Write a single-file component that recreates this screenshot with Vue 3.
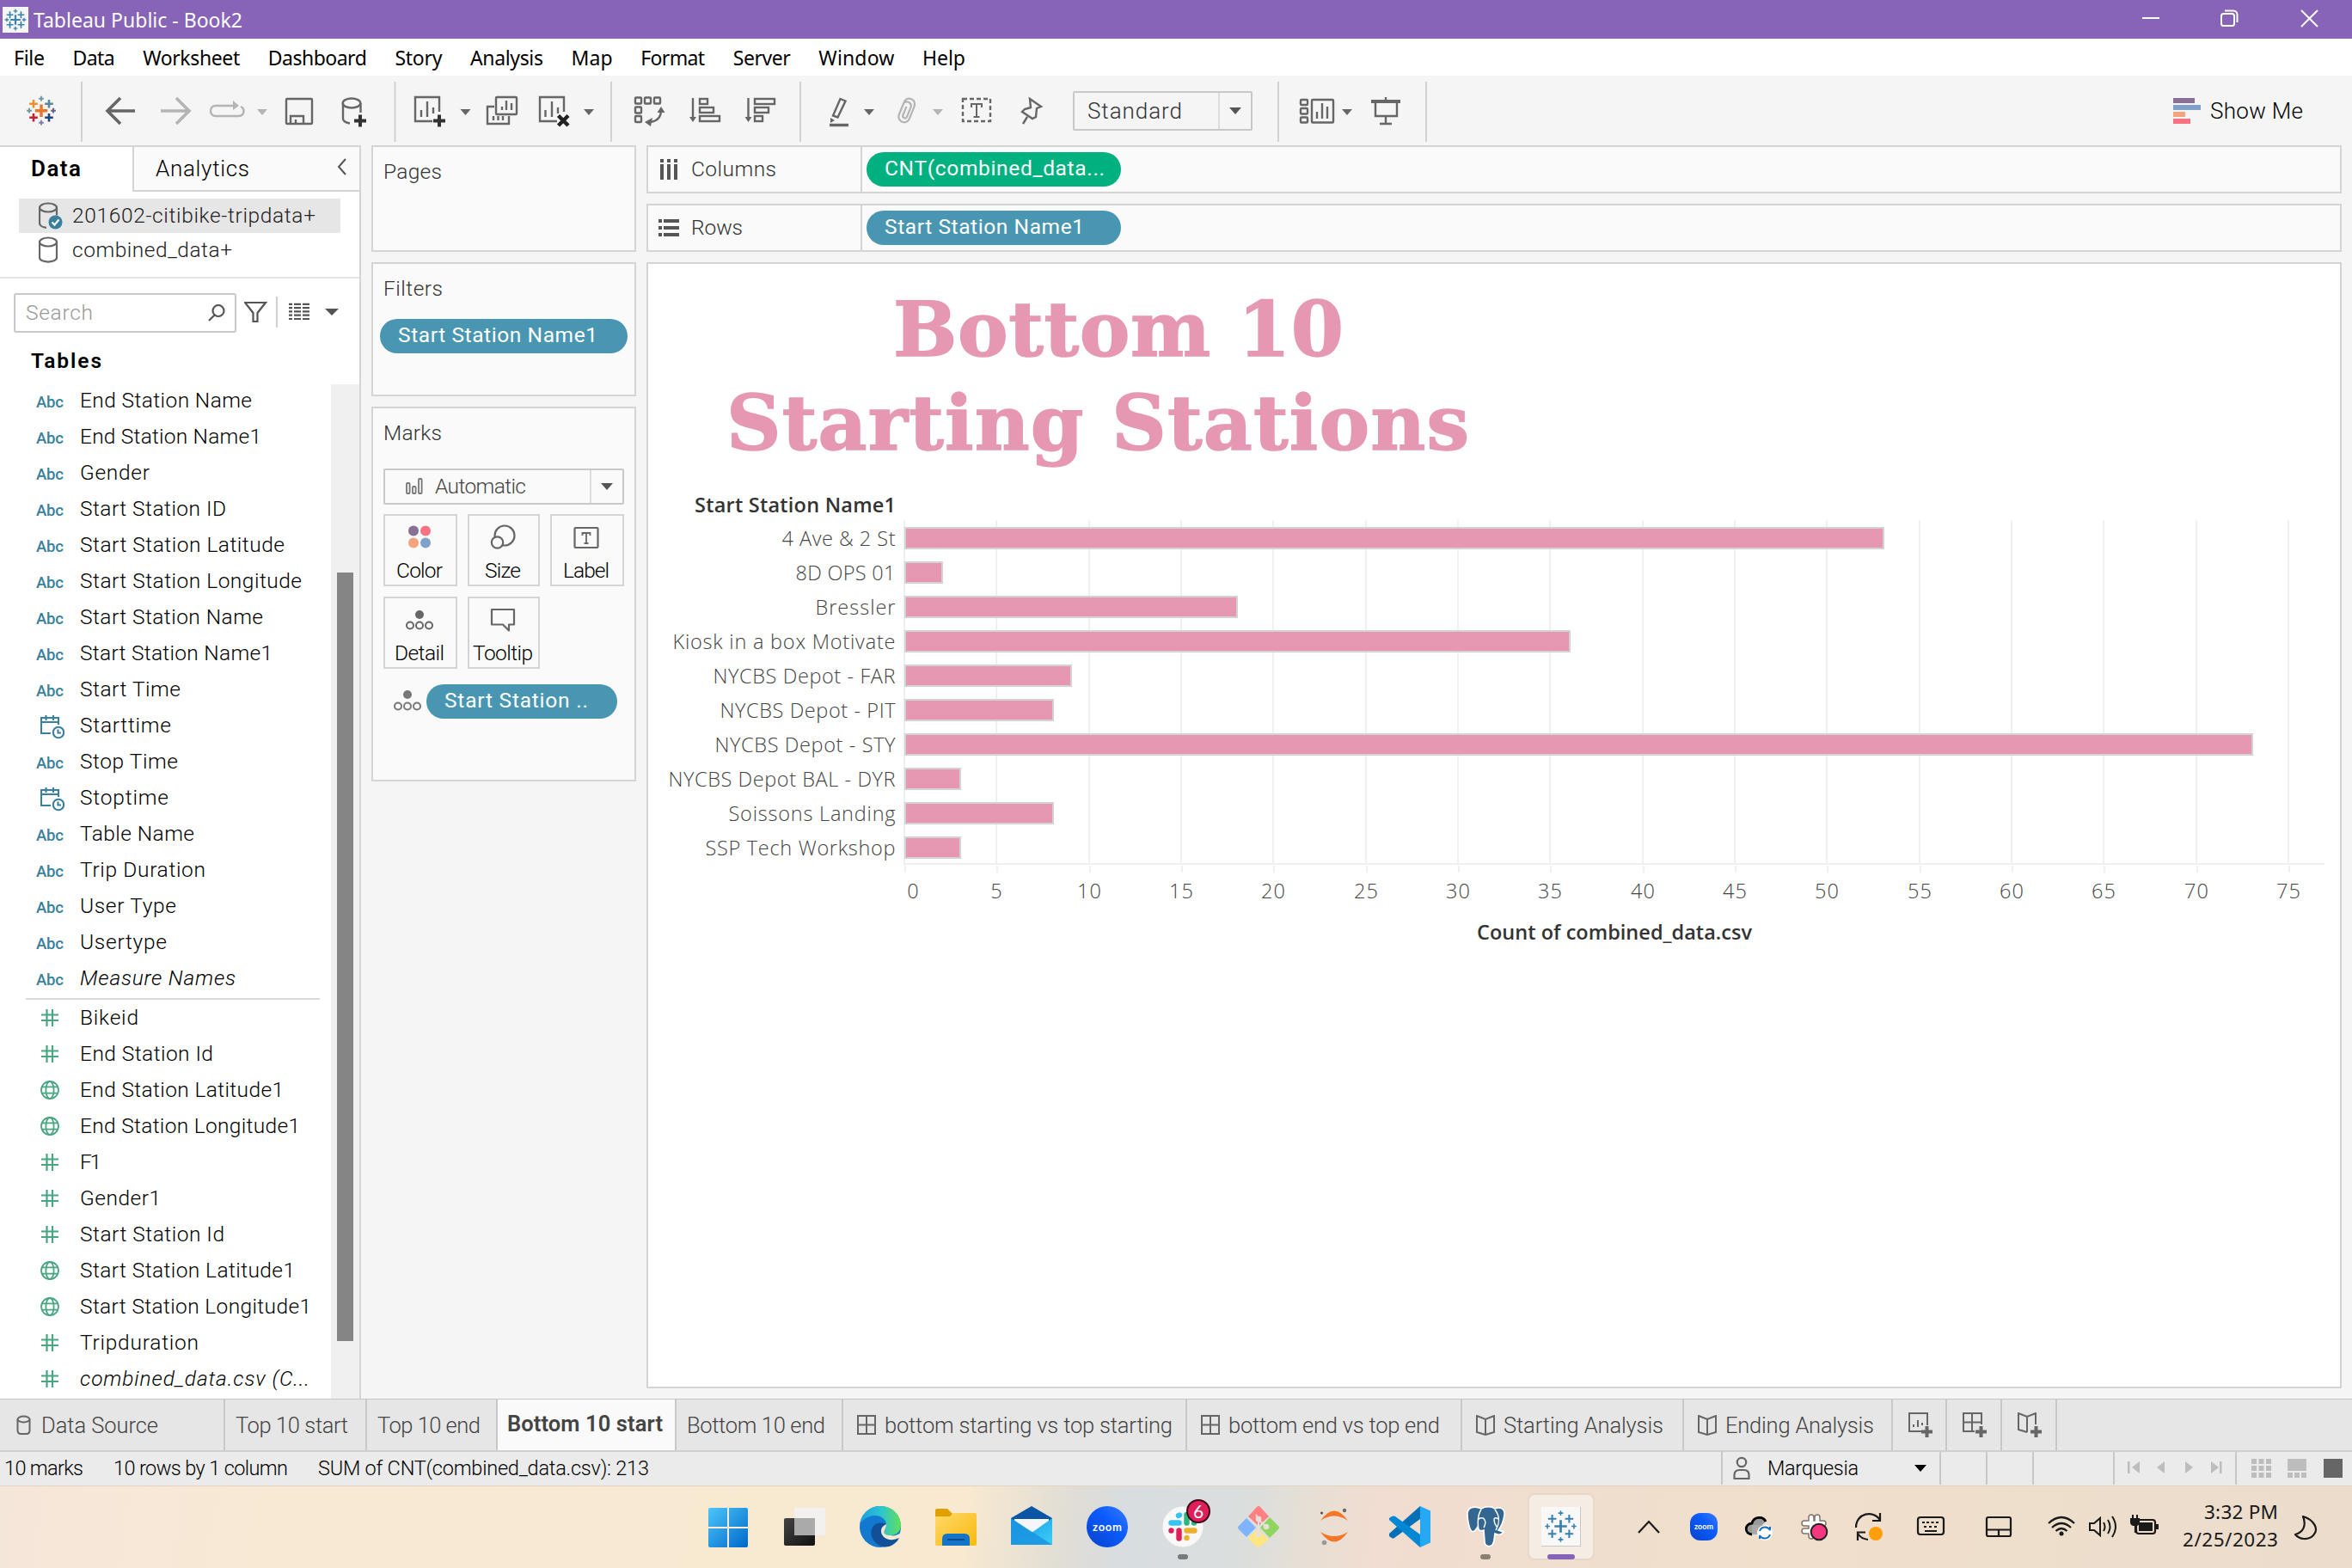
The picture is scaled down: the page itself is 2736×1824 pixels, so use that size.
<script setup>
// Tracks a label out (or in) so that it spans the given width in pixels.
const vFit = {
  mounted(el, { value }) {
    const n = el.textContent.length - 1
    const track = (value - el.getBoundingClientRect().width) / n
    el.style.letterSpacing = track + 'px'
    el.style.marginRight = -track + 'px'
  },
}

const menus = [
  ['File', 36], ['Data', 49], ['Worksheet', 113], ['Dashboard', 115], ['Story', 55], ['Analysis', 85],
  ['Map', 48], ['Format', 75], ['Server', 67], ['Window', 88], ['Help', 50],
]

const dimensions = [
  ['abc', 'End Station Name', 200], ['abc', 'End Station Name1', 211], ['abc', 'Gender', 81],
  ['abc', 'Start Station ID', 170], ['abc', 'Start Station Latitude', 238], ['abc', 'Start Station Longitude', 258],
  ['abc', 'Start Station Name', 213], ['abc', 'Start Station Name1', 224], ['abc', 'Start Time', 117],
  ['date', 'Starttime', 106], ['abc', 'Stop Time', 114], ['date', 'Stoptime', 103], ['abc', 'Table Name', 133],
  ['abc', 'Trip Duration', 146], ['abc', 'User Type', 112], ['abc', 'Usertype', 101], ['abc', 'Measure Names', 181, true],
]
const measures = [
  ['num', 'Bikeid', 68], ['num', 'End Station Id', 155], ['geo', 'End Station Latitude1', 237],
  ['geo', 'End Station Longitude1', 256], ['num', 'F1', 25], ['num', 'Gender1', 94], ['num', 'Start Station Id', 168],
  ['geo', 'Start Station Latitude1', 250], ['geo', 'Start Station Longitude1', 269], ['num', 'Tripduration', 138],
  ['num', 'combined_data.csv (C...', 267, true],
]

const stations = [
  ['4 Ave & 2 St', 53, 132], ['8D OPS 01', 2, 116], ['Bressler', 18, 93], ['Kiosk in a box Motivate', 36, 259],
  ['NYCBS Depot - FAR', 9, 212], ['NYCBS Depot - PIT', 8, 204], ['NYCBS Depot - STY', 73, 210],
  ['NYCBS Depot BAL - DYR', 3, 264], ['Soissons Landing', 8, 194], ['SSP Tech Workshop', 3, 221],
]
const ticks = Array.from({ length: 16 }, (_, i) => i * 5)
const x = (v) => Math.round(1053 + v * 21.467)

const crosses = [
  [0, 0, 9, 3.4, '#eb762b'], [-9, -8, 6, 2.6, '#eb9129'], [9, -8, 6, 2.6, '#59879b'], [-9, 8, 6, 2.6, '#c72035'],
  [9, 8, 6, 2.6, '#1f457e'], [0, -14, 3.6, 2, '#7199a6'], [-14, 0, 3.6, 2, '#7199a6'], [14, 0, 3.6, 2, '#5b6591'], [0, 14, 3.6, 2, '#8083ab'],
]
</script>

<template>
  <div class="app">
    <header class="titlebar">
      <svg class="logo" viewBox="0 0 46 46" width="30" height="30">
        <rect width="46" height="46" fill="#f6f6f7" />
        <g v-for="(c, i) in crosses" :key="i" stroke="#3a82ae" :stroke-width="c[3]">
          <path :d="`M${23 + c[0] * 1.1 - c[2]} ${23 + c[1] * 1.1}h${c[2] * 2}M${23 + c[0] * 1.1} ${23 + c[1] * 1.1 - c[2]}v${c[2] * 2}`" />
        </g>
      </svg>
      <span v-fit="243" class="apptitle">Tableau Public - Book2</span>
      <svg class="winbtns" viewBox="2493 0 205 45" width="205" height="45" fill="none" stroke="#fff" stroke-width="2">
        <path d="M2493 21h20M2678 12l19 19M2697 12l-19 19" />
        <rect x="2585" y="16" width="15" height="14" rx="2.5" />
        <path d="M2589 12.500h10a4.500 4.500 0 0 1 4.500 4.500v9" />
      </svg>
    </header>

    <nav class="menubar">
      <div v-for="m in menus" :key="m[0]" :style="{ width: m[1] + 'px' }"><span v-fit="m[1]">{{ m[0] }}</span></div>
    </nav>

    <div class="toolbar">
      <svg class="tool" viewBox="0 88 1246 81" width="1246" height="81" fill="none" stroke="#666" stroke-width="2.400">
        <path v-for="(c, i) in crosses" :key="i" :stroke="c[4]" :stroke-width="c[3]"
          :d="`M${48 + c[0] - c[2] * .8} ${128.700 + c[1]}h${c[2] * 1.600}M${48 + c[0]} ${128.700 + c[1] - c[2] * .8}v${c[2] * 1.600}`" />
        <path d="M95 95v70M459.500 95v70M711 95v70M931 95v70" stroke="#d2d2d2" stroke-width="2" />
        <path d="M157 129h-32M140 114l-15 15 15 15" stroke-width="3.600" />
        <path d="M187 129h32M205 114l15 15-15 15" stroke="#b4b4b4" stroke-width="3.600" />
        <path d="M272 123h-21c-8 0-8 12 0 12h26c8 0 8-9 3-11" stroke="#b4b4b4" />
        <path d="M271 117l7 6-7 5zM299 127h12l-6 7z" fill="#b4b4b4" stroke="none" />
        <rect x="333" y="115" width="30" height="29" rx="1" />
        <path d="M338 144v-9h15v9M344 144v-5" />
        <path d="M399 120v18q0 4 8 5.500M419.500 120v11" />
        <ellipse cx="409" cy="120" rx="10.300" ry="5.500" />
        <path d="M419 133.500v14M412 140.500h14" stroke="#333" stroke-width="4" />
        <path d="M511 130v-17h-28v28h20M490 136v-8M497 136v-18M504 132v-7" />
        <path d="M511 133.500v14M504 140.500h14" stroke="#333" stroke-width="4" />
        <path d="M535.500 127h12l-6 7zM679 127h12l-6 7z" fill="#666" stroke="none" />
        <rect x="577" y="113" width="24" height="20" rx="1" />
        <path d="M584 128v-4M589 128v-11M595 128v-8M575 124h-8v20h25v-9M574 140v-5M579.500 140v-5M585 140v-5" />
        <path d="M656 130v-17h-28v28h20M634.500 136v-8M642 136v-18M649 132v-7" />
        <path d="M649.500 134.500l11.500 11.500M661 134.500l-11.500 11.500" stroke="#222" stroke-width="4.500" />
        <rect x="739" y="113.500" width="7" height="7" rx="1" /><rect x="750" y="113.500" width="7" height="7" rx="1" /><rect x="761" y="113.500" width="7" height="7" rx="1" />
        <rect x="739" y="124.500" width="7" height="7" rx="1" /><rect x="739" y="135" width="7" height="7" rx="1" />
        <path d="M769 128q0 13-14 14" />
        <path d="M764.500 131l4.500-7 4.500 7zM759 137l-9 5 7 5z" fill="#666" stroke="none" />
        <path d="M806 114v24M870.500 114v24" />
        <path d="M802 136h8l-4 6zM866.500 136h8l-4 6z" fill="#666" stroke="none" />
        <rect x="814" y="115" width="9" height="6" /><rect x="814" y="125" width="16" height="6" /><rect x="814" y="135" width="23" height="6" />
        <rect x="878" y="115" width="23" height="6" /><rect x="878" y="125" width="16" height="6" /><rect x="878" y="135" width="9" height="6" />
        <path d="M977.500 115l6 2.500-9 19-5.500-2z" />
        <path d="M966 137l5 3-5 3z" fill="#666" stroke="none" />
        <path d="M965 145.500h22" stroke-width="3.400" />
        <path d="M1005 127h12l-6 7z" fill="#666" stroke="none" />
        <path d="M1085 127h12l-6 7z" fill="#b4b4b4" stroke="none" />
        <path transform="rotate(22 1054 129)" d="M1061 121v15a6.500 6.500 0 0 1-13 0v-14a5 5 0 0 1 9.500 0v13a2.500 2.500 0 0 1-5 0v-11M1061 122q0-8-7-8-6 0-6 8" stroke="#b4b4b4" stroke-width="2.200" />
        <rect x="1120" y="115" width="32" height="26" stroke-dasharray="5 3" />
        <path d="M1130 125v-4h12v4M1136 121v15M1132.500 136h7" stroke-width="2" />
        <path d="M1198 115l13 9-5 2-1 10-4 2-12-8 3-3 7-2zM1195 136l-5 8" />
      </svg>
      <div class="combo">
        <span v-fit="110">Standard</span>
        <i class="caret"></i>
      </div>
      <svg viewBox="1458 88 230 81" width="230" height="81" fill="none" stroke="#666" stroke-width="2.400">
        <path d="M1487 95v70M1659 95v70" stroke="#d2d2d2" stroke-width="2" />
        <rect x="1513" y="116" width="8" height="6" rx="1" /><rect x="1513" y="126" width="8" height="6.500" rx="1" /><rect x="1513" y="136.500" width="8" height="6" rx="1" />
        <rect x="1526" y="116" width="25" height="26.500" rx="1" />
        <path d="M1532 138v-8M1538 138v-18M1544 138v-14M1612 113v7M1600 118v17h25v-17M1612 135v9M1605 144h14" />
        <path d="M1595 118h34" stroke-width="4" />
        <path d="M1561 127h12l-6 7z" fill="#666" stroke="none" />
      </svg>
      <div class="showme">
        <svg viewBox="0 0 32 30" width="32" height="30">
          <path d="M0 0h25v6H0z" fill="#876f96" /><path d="M0 8h32v6H0z" fill="#80a2c9" />
          <path d="M0 16h14v6H0z" fill="#f2a47d" /><path d="M0 24h20v6H0z" fill="#f97282" />
        </svg>
        <span v-fit="108">Show Me</span>
      </div>
    </div>

    <main class="work">
      <aside class="side">
        <div class="sidetabs">
          <div class="tab-data"><b v-fit="58">Data</b></div>
          <div class="tab-an">
            <span v-fit="109">Analytics</span>
            <svg viewBox="0 0 12 20" width="12" height="20" fill="none" stroke="#555" stroke-width="2"><path d="M10 1L2 10l8 9" /></svg>
          </div>
        </div>
        <div class="sources">
          <div class="src on">
            <svg viewBox="0 0 32 32" width="32" height="32" fill="none" stroke="#666" stroke-width="2.200">
              <ellipse cx="11" cy="6.500" rx="10" ry="5" /><path d="M1 6.500v18c0 3 4 5 8 5.400M21 6.500v9" />
              <circle cx="19.500" cy="23.500" r="8" fill="#3a7f9e" stroke="none" /><path d="M15.500 23.500l3 3 5-6" stroke="#fff" />
            </svg>
            <span v-fit="283">201602-citibike-tripdata+</span>
          </div>
          <div class="src">
            <svg viewBox="0 0 32 32" width="32" height="32" fill="none" stroke="#666" stroke-width="2.200">
              <ellipse cx="11" cy="6.500" rx="10" ry="5" /><path d="M1 6.500v18c0 6.700 20 6.700 20 0v-18" />
            </svg>
            <span v-fit="186">combined_data+</span>
          </div>
        </div>
        <div class="searchrow">
          <div class="search">
            <span v-fit="78">Search</span>
            <svg viewBox="0 0 20 20" width="20" height="20" fill="none" stroke="#555" stroke-width="2.200"><circle cx="12" cy="7.500" r="6.500" /><path d="M7.500 12.500L1 19" /></svg>
          </div>
          <svg viewBox="284 340 112 48" width="112" height="48" fill="none" stroke="#555" stroke-width="2.200">
            <path d="M285 352h24l-9.500 12v10h-5v-10z" />
            <path d="M322 345v36" stroke="#d2d2d2" />
            <path v-for="n in 5" :key="n" :d="`M336 ${349.500 + n * 4.300}h4M342 ${349.500 + n * 4.300}h8M352 ${349.500 + n * 4.300}h8`" />
            <path d="M378 359h16l-8 8z" fill="#555" stroke="none" />
          </svg>
        </div>
        <div class="tables"><b v-fit="82">Tables</b></div>
        <div class="fieldarea">
          <div class="fields">
            <template v-for="(group, g) in [dimensions, measures]" :key="g">
              <div v-if="g" class="sep"></div>
              <div v-for="f in group" :key="f[1]" class="field">
                <div class="ficon">
                  <span v-if="f[0] === 'abc'" v-fit="32" class="abc">Abc</span>
                  <svg v-else-if="f[0] === 'num'" viewBox="0 0 20 20" width="20" height="20" stroke="#49a582" stroke-width="2.200"><path d="M6.500 0v20M13 0v20M0 6.500h20M0 13h20" /></svg>
                  <svg v-else-if="f[0] === 'geo'" class="geo" viewBox="0 0 22 22" width="22" height="22" fill="none" stroke="#49a582" stroke-width="1.800"><circle cx="11" cy="11" r="10" /><ellipse cx="11" cy="11" rx="4.600" ry="10" /><path d="M2 7.300h18M2 14.700h18" /></svg>
                  <svg v-else class="cal" viewBox="0 0 28 28" width="28" height="28" fill="none" stroke="#3a7f9e" stroke-width="2.100"><path d="M12 21H1V3h20v8M1 8h20M6.500 0v6M15 0v6" /><circle cx="21" cy="20" r="6.200" /><path d="M20.500 16.500v4h3.500" /></svg>
                </div>
                <span v-fit="f[2]" :class="{ it: f[3] }">{{ f[1] }}</span>
              </div>
            </template>
          </div>
          <div class="scroll"><div class="thumb"></div></div>
        </div>
      </aside>

      <section class="cards">
        <div class="card pages"><h3 v-fit="68">Pages</h3></div>
        <div class="card filters">
          <h3 v-fit="69">Filters</h3>
          <div class="pill"><span v-fit="232">Start Station Name1</span></div>
        </div>
        <div class="card marks">
          <h3 v-fit="68">Marks</h3>
          <div class="marktype">
            <svg viewBox="0 0 20 20" width="20" height="20" fill="none" stroke="#777" stroke-width="1.800"><rect x="1" y="6" width="3.600" height="12" rx="1" /><rect x="8" y="10" width="3.600" height="8" rx="1" /><rect x="15" y="1" width="3.600" height="17" rx="1" /></svg>
            <span v-fit="106">Automatic</span>
            <i class="caret"></i>
          </div>
          <div class="mbtns">
            <div class="mb">
              <svg viewBox="0 0 30 30" width="30" height="30"><circle cx="8" cy="7.500" r="6" fill="#876f96" /><circle cx="22" cy="7.500" r="6" fill="#f97282" /><circle cx="8" cy="21.500" r="6" fill="#f2a47d" /><circle cx="22" cy="21.500" r="6" fill="#80a2c9" /></svg>
              <span v-fit="54">Color</span>
            </div>
            <div class="mb">
              <svg viewBox="0 0 30 30" width="30" height="30" fill="#fafafa" stroke="#666" stroke-width="2.200"><circle cx="17" cy="13" r="11.500" /><circle cx="8.500" cy="21" r="6.700" /></svg>
              <span v-fit="42">Size</span>
            </div>
            <div class="mb">
              <svg viewBox="0 0 30 30" width="30" height="30" fill="none" stroke="#666" stroke-width="2.200"><rect x="1.500" y="4" width="27" height="23" rx="1" /><path d="M10.500 13v-3h9v3M15 10v12M12.500 22h5" stroke-width="1.800" /></svg>
              <span v-fit="54">Label</span>
            </div>
            <div class="mb">
              <svg viewBox="0 0 32 30" width="32" height="30" fill="none" stroke="#666" stroke-width="2"><circle cx="16" cy="9" r="5" fill="#666" stroke="none" /><circle cx="5" cy="21.500" r="4" /><circle cx="16" cy="21.500" r="4" /><circle cx="27" cy="21.500" r="4" /></svg>
              <span v-fit="58">Detail</span>
            </div>
            <div class="mb">
              <svg viewBox="0 0 30 30" width="30" height="30" fill="none" stroke="#666" stroke-width="2.200"><path d="M2 3h26v17.500h-6v7l-7-7H2z" stroke-linejoin="round" /></svg>
              <span v-fit="70">Tooltip</span>
            </div>
          </div>
          <div class="markpill">
            <svg viewBox="0 0 32 30" width="32" height="30" fill="none" stroke="#777" stroke-width="2"><circle cx="16" cy="7" r="5" fill="#777" stroke="none" /><circle cx="5" cy="20.500" r="4" /><circle cx="16" cy="20.500" r="4" /><circle cx="27" cy="20.500" r="4" /></svg>
            <div class="pill"><span v-fit="167">Start Station ..</span></div>
          </div>
        </div>
      </section>

      <section class="view">
        <div class="shelf">
          <div class="shelfname">
            <svg viewBox="0 0 24 24" width="24" height="24" stroke="#555" stroke-width="4"><path d="M4 6v18M12 6v18M20 6v18M4 0v4M12 0v4M20 0v4" /></svg>
            <span v-fit="99">Columns</span>
          </div>
          <div class="pill green"><span v-fit="256">CNT(combined_data...</span></div>
        </div>
        <div class="shelf">
          <div class="shelfname">
            <svg viewBox="0 0 24 24" width="24" height="24" stroke="#555" stroke-width="4"><path d="M6 4h18M6 12h18M6 20h18M0 4h4M0 12h4M0 20h4" /></svg>
            <span v-fit="60">Rows</span>
          </div>
          <div class="pill"><span v-fit="232">Start Station Name1</span></div>
        </div>
        <div class="sheet">
          <div class="title">
            <div class="t1"><span v-fit="524">Bottom 10</span></div>
            <div class="t2"><span v-fit="864">Starting Stations</span></div>
          </div>
          <svg class="chart" viewBox="755 527 1967 600" width="1967" height="600">
            <text class="bold" x="809" y="596" textLength="234">Start Station Name1</text>
            <path v-for="t in ticks" :key="t" :d="`M${x(t)} 605v399m1 3v8`" stroke="#f0f0f0" stroke-width="2" />
            <path d="M1052 1005h1653" stroke="#f0f0f0" stroke-width="2" />
            <g v-for="(s, i) in stations" :key="s[0]">
              <text :x="1042.500 - s[2]" :y="634.500 + i * 40" :textLength="s[2]">{{ s[0] }}</text>
              <rect x="1054" :y="614 + i * 40" :width="x(s[1]) - 1053" height="24" fill="#e698b3" stroke="#d3d3d3" stroke-width="2" />
            </g>
            <text v-for="t in ticks" :key="'l' + t" :x="t ? x(t) : 1063" y="1044.500" text-anchor="middle" :textLength="t > 9 ? 28 : 14">{{ t }}</text>
            <text class="bold" x="1719" y="1092.500" textLength="320">Count of combined_data.csv</text>
          </svg>
        </div>
      </section>
    </main>

    <footer class="tabs">
      <div class="st" style="width: 262px">
        <svg class="ic1" viewBox="0 0 16 24" width="17" height="24" fill="none" stroke="#666" stroke-width="2"><ellipse cx="8" cy="5" rx="7" ry="3.500" /><path d="M1 5v13q0 4 4 4h6q4 0 4-4V5" /></svg>
        <span v-fit="136" class="s1">Data Source</span>
      </div>
      <div class="st" style="width: 165px"><span v-fit="131">Top 10 start</span></div>
      <div class="st" style="width: 152px"><span v-fit="120">Top 10 end</span></div>
      <div class="st cur" style="width: 208px"><b v-fit="181">Bottom 10 start</b></div>
      <div class="st" style="width: 194px"><span v-fit="161">Bottom 10 end</span></div>
      <div class="st wi" style="width: 400px"><svg viewBox="0 0 22 24" width="22" height="24"><path d="M1 1h20v21H1zM11 1v21M1 11.500h20" /></svg><span v-fit="335">bottom starting vs top starting</span></div>
      <div class="st wi" style="width: 320px"><svg viewBox="0 0 22 24" width="22" height="24"><path d="M1 1h20v21H1zM11 1v21M1 11.500h20" /></svg><span v-fit="246">bottom end vs top end</span></div>
      <div class="st wi" style="width: 258px"><svg viewBox="0 0 22 24" width="22" height="24"><path d="M1 1l10 4 10-4v19l-10 3-10-3zM11 5v18" /></svg><span v-fit="186">Starting Analysis</span></div>
      <div class="st wi" style="width: 243px"><svg viewBox="0 0 22 24" width="22" height="24"><path d="M1 1l10 4 10-4v19l-10 3-10-3zM11 5v18" /></svg><span v-fit="173">Ending Analysis</span></div>
      <div class="st nw" style="width: 63px"><svg viewBox="0 0 30 30" width="30" height="30"><path d="M22 15V1H1v21h14M6 17v-3M11 17V9M16 15v-3" /><path d="M21.500 16v13M15 22.500h13" stroke-width="4" /></svg></div>
      <div class="st nw" style="width: 64px"><svg viewBox="0 0 30 30" width="30" height="30"><path d="M22 14V1H1v21h13M11 1v21M1 11.500h21" /><path d="M21.500 16v13M15 22.500h13" stroke-width="4" /></svg></div>
      <div class="st nw" style="width: 64px"><svg viewBox="0 0 30 30" width="30" height="30"><path d="M21 14V1l-10 4L1 1v19l10 3M11 5v18" /><path d="M21.500 16v13M15 22.500h13" stroke-width="4" /></svg></div>
    </footer>

    <div class="status">
      <span v-fit="92">10 marks</span>
      <span v-fit="203">10 rows by 1 column</span>
      <span v-fit="385">SUM of CNT(combined_data.csv): 213</span>
      <div class="user">
        <svg viewBox="0 0 20 28" width="20" height="28" fill="none" stroke="#666" stroke-width="2.200"><circle cx="10" cy="7" r="5.200" /><path d="M1.500 26v-4q0-6 6-6h5q6 0 6 6v4z" /></svg>
        <span v-fit="106">Marquesia</span>
        <i class="caret blk"></i>
      </div>
      <svg viewBox="2256 1689 480 39" width="480" height="39" fill="#bdbdbd">
        <path d="M2257 1690v38M2311 1690v38M2365 1690v38M2459 1690v38M2601 1690v38" stroke="#c8c8c8" stroke-width="2" />
        <path d="M2475 1701h2.500v14h-2.500zM2489 1701v14l-9-7zM2518 1701v14l-9-7zM2542 1701v14l9-7zM2572 1701v14l9-7zM2582 1701h2.500v14h-2.500z" />
        <path d="M2619 1698h6v6h-6zM2627.500 1698h6v6h-6zM2636 1698h6v6h-6zM2619 1706h6v6h-6zM2627.500 1706h6v6h-6zM2636 1706h6v6h-6zM2619 1714h6v6h-6zM2627.500 1714h6v6h-6zM2636 1714h6v6h-6z" />
        <path d="M2661 1698h22v14h-22zM2661 1714h6v6h-6zM2669 1714h6v6h-6zM2677 1714h6v6h-6z" />
        <path d="M2703 1698h22v22h-22z" fill="#666" />
      </svg>
    </div>

    <div class="taskbar">
      <svg class="apps" viewBox="810 1729 1050 95" width="1050" height="95">
        <defs>
          <linearGradient id="win" x2="1" y2="1"><stop offset="0" stop-color="#4cc7fb" /><stop offset="1" stop-color="#0067c8" /></linearGradient>
          <linearGradient id="edge" x2="1"><stop offset="0" stop-color="#1b9de2" /><stop offset=".5" stop-color="#2cc3d2" /><stop offset="1" stop-color="#5fe05a" /></linearGradient>
          <linearGradient id="fold" x2="1" y2="1"><stop offset="0" stop-color="#ffd969" /><stop offset="1" stop-color="#f9b90e" /></linearGradient>
          <linearGradient id="mail" x2="1" y2="1"><stop offset="0" stop-color="#1a98e4" /><stop offset="1" stop-color="#3ad0f6" /></linearGradient>
          <linearGradient id="zm" x1="1" x2="0" y2="1"><stop offset="0" stop-color="#3a7bff" /><stop offset=".4" stop-color="#0b5cff" /><stop offset="1" stop-color="#0742c8" /></linearGradient>
          <linearGradient id="dark" x2="1" y2="1"><stop offset="0" stop-color="#444" /><stop offset="1" stop-color="#111" /></linearGradient>
        </defs>
        <path d="M824 1756q0-2 2-2h20v22h-22zM848 1754h20q2 0 2 2v20h-22zM824 1778h22v22h-20q-2 0-2-2zM848 1778h22v20q0 2-2 2h-20z" fill="url(#win)" />
        <rect x="912" y="1766" width="36" height="32" rx="2" fill="url(#dark)" /><rect x="924" y="1754" width="36" height="32" rx="2" fill="#f1f1f2" fill-opacity=".93" /><path d="M924 1766h24v20h-24z" fill="#aaa" />
        <circle cx="1024" cy="1776" r="24" fill="#1278d0" />
        <path d="M1000 1774c2-14 12-22 24-22 15 0 24 11 24 22 0 7-5 12-12 12-6 0-9-2-7-6 1-3 2-4 2-7 0-5-6-10-13-10-9 0-15 5-18 11z" fill="url(#edge)" />
        <path d="M1031 1773c-12-5-20 4-17 14 3 9 12 14 20 12 6-2 10-6 12-10-9 5-20 1-21-8 0-3 2-6 6-8z" fill="#114f97" />
        <path d="M1031 1773c-4 2-6 4-6 8 0 5 4 9 10 10 5 1 11-2 13-5v-3c-4 3-9 4-12 3-6 0-9-2-7-6 1-3 2-4 2-7z" fill="#f6e8d2" />
        <path d="M1088 1757q0-2 2-2h12l6 6v8h-20z" fill="#dfa002" /><path d="M1088 1764h17l4-4h25q2 0 2 2v34q0 2-2 2h-44q-2 0-2-2z" fill="url(#fold)" />
        <path d="M1096 1798v-8q0-6 6-6h20q6 0 6 6v8z" fill="#1374c8" /><path d="M1102 1791h20" stroke="#0b4d8c" stroke-width="2" />
        <path d="M1176 1766l24-14 24 14v14h-48z" fill="#0a55a5" /><path d="M1180 1767h40v14l-20 8-20-8z" fill="#f4f6f9" /><path d="M1176 1766l24 17 24-17v31h-48z" fill="url(#mail)" /><path d="M1176 1766l48 31h-48z" fill="#1a94e0" opacity=".85" />
        <circle cx="1288" cy="1776" r="24" fill="url(#zm)" />
        <text x="1271" y="1781" textLength="34" class="zoomt">zoom</text>
        <circle cx="1376" cy="1776" r="23.500" fill="#f8f8f8" />
        <g stroke-width="6.400" stroke-linecap="round">
          <path d="M1362.500 1771.500h9M1372 1762.500l-1 .5" stroke="#36c5f0" /><path d="M1380.500 1762v9.500M1389 1771.500h0" stroke="#2eb67d" />
          <path d="M1380.500 1780.500h9M1380.500 1789h0" stroke="#ecb22e" /><path d="M1371.500 1780.500v9M1362.500 1780.500h0" stroke="#e01e5a" />
        </g>
        <circle cx="1394" cy="1758" r="13" fill="#e01e5a" stroke="#400819" stroke-width="2" /><text x="1394" y="1765.500" text-anchor="middle" class="badge">6</text>
        <rect x="1370" y="1808" width="12" height="6" rx="3" fill="#777a7c" />
        <path d="M1452 1764l10-11q2-2 4 0l10 11-12 11z" fill="#ff8080" /><path d="M1450 1766l11 11-11 11-9-9q-2-2 0-4z" fill="#80b3ff" /><path d="M1477 1765l10 10q2 2 0 4l-10 10-11-12z" fill="#8ed65f" /><path d="M1463.500 1779l12 12-10 8q-2 2-4 0l-10-10z" fill="#ffe680" />
        <path d="M1461 1762l3 5v15M1464 1768l9 8" stroke="#e9dfd8" stroke-width="2" fill="none" /><circle cx="1464" cy="1767" r="3.300" fill="#e9dfd8" /><circle cx="1464" cy="1785" r="3.300" fill="#e9dfd8" /><circle cx="1473" cy="1776" r="3.300" fill="#e9dfd8" />
        <path d="M1536 1769q16-23 32 0-16-11-32 0zM1536 1782q16 23 32 0-16 10-32 0z" fill="#f37726" /><circle cx="1564" cy="1757" r="2.200" fill="#6a6a6a" /><circle cx="1537.500" cy="1760" r="1.600" fill="#555" /><circle cx="1540.500" cy="1794.500" r="2.800" fill="#999" />
        <path d="M1616 1784l36-32v15l-30 22q-2 1-3 0l-3-2z" fill="#0070b8" /><path d="M1616 1768v-2l3-2q2-1 4 0l29 21v15z" fill="#0088d4" /><path d="M1652 1752l12 5.500v37l-12 5.500z" fill="#26a8f2" />
        <path d="M1707 1760c1-8 10-8 16-5 5-3 12-3 16 0 7-3 12 1 11 7-1 8-4 14-7 18l6 2c-2 3-6 4-10 2-1 5 0 9-3 13-3 3-9 2-9-4l-1-13c-5 2-7-1-7-4-4 7-8 10-11-5-1-4-1-8-1-11z" fill="#336791" stroke="#fff" stroke-width="1.600" />
        <path d="M1723 1756c-5 7-4 17-3 24M1739 1756c6 8 6 15 1 24M1720 1767q5-3 7 1t-1 9M1743 1767q-5-3-5 1t3 8" fill="none" stroke="#fff" stroke-width="1.500" />
        <rect x="1722" y="1808" width="12" height="6" rx="3" fill="#8b7f76" />
        <rect x="1778" y="1738" width="76" height="76" rx="7" fill="#f5ece4" stroke="#e6d8ca" stroke-width="2" />
        <rect x="1793" y="1753" width="46" height="46" fill="#c9c6c4" /><rect x="1793" y="1753" width="45" height="45" fill="#f8f8f8" />
        <path v-for="(c, i) in crosses" :key="i" stroke="#3a82ae" :stroke-width="c[3] * .8"
          :d="`M${1815.500 + c[0] - (c[0] ? -c[0] * .1 : 0) - c[2] * .8} ${1775.500 + c[1] * 1.100}h${c[2] * 1.600}M${1815.500 + c[0] * 1.100} ${1775.500 + c[1] * 1.100 - c[2] * .8}v${c[2] * 1.600}`" />
        <rect x="1800" y="1808" width="32" height="6" rx="3" fill="#8764b8" />
      </svg>
      <svg class="tray" viewBox="1900 1729 620 95" width="620" height="95" fill="none" stroke="#1a1a1a" stroke-width="2.200">
        <path d="M1906 1783l12-13 12 13" />
        <rect x="1966" y="1760" width="32" height="32" rx="12" fill="url(#zm)" stroke="none" />
        <text x="1971" y="1779" textLength="22" class="zoomt sm" stroke="none">zoom</text>
        <path d="M2038 1785c-9-1-9-12 0-13 2-8 13-9 16-2" fill="#9a9a9a" stroke="#000" stroke-width="2.800" />
        <path d="M2038 1774h14v11h-14z" fill="#aaa" stroke="none" />
        <circle cx="2053" cy="1783" r="9" fill="#fff" stroke="none" /><path d="M2047 1781a6.500 6.500 0 0 1 12-1v-4M2059 1785a6.500 6.500 0 0 1-12 1v4" stroke="#1470c0" stroke-width="2" />
        <g stroke-linecap="round"><path d="M2107 1765v22M2114 1765v22M2099 1772h22M2099 1781h12" stroke="#81766c" stroke-width="7.500" /><path d="M2107 1765v22M2114 1765v22M2099 1772h22M2099 1781h12" stroke="#fff" stroke-width="4.500" /></g>
        <circle cx="2116" cy="1782" r="9.300" fill="#f5377f" stroke="#222" stroke-width="2" />
        <path d="M2159 1777c0-17 20-21 28-9M2187 1760v9h-9M2173 1791q-8-1-12-7M2161 1792v-9.500h9" />
        <circle cx="2182" cy="1784" r="8" fill="#ff9d0a" stroke="none" />
        <rect x="2231" y="1765" width="30" height="20" rx="3" /><path d="M2236 1771h3M2241 1771h3M2246.500 1771h3M2252 1771h3M2238 1776h3M2244 1776h3M2250 1776h3M2239 1781h14" />
        <rect x="2311" y="1765" width="28" height="22" rx="2" /><path d="M2311 1779.500h28M2325 1779.500v8" />
        <path d="M2383 1772q15-14 30 0M2387 1777q11-10 22 0M2391.500 1781q6.500-6 13 0" /><circle cx="2398" cy="1784" r="2.500" fill="#1a1a1a" stroke="none" />
        <path d="M2431 1772h5l7-6v20l-7-6h-5zM2447 1771q3 5 0 10M2452 1768q5 8 0 16M2457 1764q8 12 0 24" stroke-width="2" />
        <rect x="2485" y="1768" width="22" height="16" rx="3" /><path d="M2488 1771h16v10h-16zM2508 1773h3v6h-3zM2478 1766h11v5q0 3-3.500 4h-4q-3.500-1-3.500-4zM2480 1762h2v4h-2zM2485 1762h2v4h-2z" fill="#1a1a1a" stroke="none" /><path d="M2484 1774v9" />
      </svg>
      <div class="clock"><span v-fit="86">3:32 PM</span><span v-fit="111">2/25/2023</span></div>
      <svg viewBox="0 0 28 30" width="28" height="30" fill="none" stroke="#1a1a1a" stroke-width="2.200"><path d="M11 2c13 4 19 15 12 22-6 6-16 5-21-1 10-3 13-11 9-21z" stroke-linejoin="round" /></svg>
    </div>
  </div>
</template>

<style>
body { margin: 0; overflow: hidden; }
</style>

<style scoped>
.app { width: 2736px; height: 1824px; display: flex; flex-direction: column; background: #f5f5f5; font: 300 24.5px/34px Roboto, "Open Sans", sans-serif; color: #000; white-space: pre; overflow: hidden; }
.app * { box-sizing: border-box; }
svg { display: block; flex: none; }
span, b { flex: none; }
b { font-weight: 600; }
h3 { margin: 0; font: inherit; color: #333; align-self: flex-start; }

.titlebar { height: 45px; background: #8764b8; display: flex; align-items: center; padding: 0 39px 0 3px; color: #fff; font: 23px/34px "Noto Sans", sans-serif; }
.apptitle { margin-left: 6px; }
.winbtns { margin-left: auto; }

.menubar { height: 43px; background: #fff; display: flex; align-items: center; gap: 32.600px; padding: 1px 0 0 16px; font: 23px/34px "Noto Sans", sans-serif; color: #000; }

.toolbar { height: 81px; display: flex; align-items: center; }
.combo { width: 209px; height: 46px; margin: 0 1px 0 2px; border: 2px solid #c8c8c8; border-radius: 2px; display: flex; align-items: center; padding-left: 15px; color: #333; font-size: 26px; }
.caret { margin-left: auto; width: 38px; height: 100%; border-left: 2px solid #ddd; display: flex; align-items: center; justify-content: center; }
.caret::after { content: ""; border: 7px solid transparent; border-top: 8px solid #555; border-bottom: 0; }
.caret.blk { border: 0; width: 14px; }
.caret.blk::after { border-top-color: #000; }
.showme { margin-left: auto; margin-right: 57px; display: flex; align-items: center; gap: 11px; font-size: 26px; color: #000; }

.work { height: 1458px; display: flex; }
.side { width: 420px; background: #fff; border-top: 2px solid #d4d4d4; border-right: 2px solid #d4d4d4; display: flex; flex-direction: column; }
.sidetabs { height: 52px; display: flex; font-size: 26px; }
.tab-data { width: 154px; padding: 8px 0 0 36px; color: #000; }
.tab-an { flex: 1; display: flex; align-items: flex-start; justify-content: space-between; background: #fafafa; border-left: 2px solid #d4d4d4; border-bottom: 2px solid #d4d4d4; padding: 8px 14px 0 25px; color: #000; }
.tab-an svg { margin-top: 5px; }
.sources { height: 101px; border-bottom: 2px solid #e4e4e4; padding: 8px 22px 0; color: #222; }
.src { height: 40px; display: flex; align-items: center; padding-left: 23px; gap: 7px; }
.on { background: #e6e6e6; }
.searchrow { height: 48px; margin-top: 16px; display: flex; align-items: center; padding-left: 16px; gap: 9px; }
.search { width: 259px; height: 46px; border: 2px solid #c8c8c8; border-radius: 3px; display: flex; align-items: center; justify-content: space-between; padding: 0 11px 0 12px; color: #999; }
.tables { height: 57px; padding: 15px 0 0 36px; color: #000; }
.fieldarea { flex: 1; display: flex; }
.fields { flex: 1; }
.field { height: 42px; display: flex; align-items: center; }
.ficon { width: 51px; margin-left: 42px; display: flex; align-items: center; }
.ficon svg { margin-left: 6px; }
.ficon .geo { margin-left: 5px; }
.ficon .cal { margin-left: 5px; margin-top: 4px; }
.abc { font-size: 18.5px; font-weight: 500; color: #3a7f9e; padding-top: 4px; }
.it { font-style: italic; }
.sep { height: 4px; margin: 0 13px 0 30px; border-bottom: 2px solid #dadada; }
.scroll { width: 33px; margin-top: 2px; background: #f0f0f0; padding: 219px 7px 0; }
.thumb { height: 894px; width: 19px; background: #858585; }

.cards { width: 308px; margin-left: 12px; display: flex; flex-direction: column; gap: 12px; }
.card { border: 2px solid #d4d4d4; background: #fafafa; padding: 12px 12px 0 12px; display: flex; flex-direction: column; }
.pages { height: 124px; }
.filters { height: 156px; }
.marks { height: 436px; }
.pill { height: 40px; border-radius: 20px; background: #4996b2; color: #fff; display: flex; align-items: center; padding-left: 21px; padding-bottom: 2px; font-weight: 400; }
.green { background: #00b180; }
.filters .pill { margin: 18px -4px 0 -4px; }
.marktype { height: 42px; margin-top: 24px; border: 2px solid #c8c8c8; border-radius: 2px; display: flex; align-items: center; padding-left: 24px; gap: 14px; color: #444; }
.mbtns { display: grid; grid-template-columns: 86px 84px 86px; gap: 12px; margin: 11px -2px 0 0; }
.mb { height: 84px; border: 2px solid #d4d4d4; display: flex; flex-direction: column; align-items: center; padding: 10px 2px 0 0; color: #000; }
.mb span { margin-top: 7px; }
.markpill { display: flex; align-items: center; margin: 18px 0 0 12px; }
.markpill .pill { width: 222px; margin-left: 6px; }

.view { width: 1972px; margin-left: 12px; display: flex; flex-direction: column; gap: 12px; }
.shelf { height: 56px; border: 2px solid #d4d4d4; background: #fafafa; display: flex; align-items: center; }
.shelfname { width: 249px; height: 52px; border-right: 2px solid #d4d4d4; padding-left: 12px; display: flex; align-items: center; gap: 14px; color: #333; margin-right: 5px; }
.shelf .pill { width: 296px; }
.sheet { height: 1310px; border: 2px solid #d4d4d4; background: #fff; }
.title { height: 220px; padding-top: 22px; font: 700 88px/109px "DejaVu Serif", serif; color: #e698b3; -webkit-text-stroke: 1.5px #e698b3; }
.t1 { padding-left: 285px; }
.t2 { padding-left: 91px; }
.chart text { font: 300 23.5px "Open Sans", "Noto Sans", sans-serif; fill: #444; }
.chart .bold { font-weight: 600; fill: #333; }

.tabs { height: 62px; background: #e6e6e6; border-top: 1px solid #c6c6c6; border-bottom: 2px solid #cfcfcf; display: flex; color: #444; font-size: 25.5px; }
.st { height: 59px; flex: none; border-right: 2px solid #c8c8c8; display: flex; align-items: center; padding: 0 0 0 12px; }
.cur { background: #fafafa; color: #444; padding-bottom: 3px; padding-left: 11px; }
.st svg { fill: none; stroke: #666; stroke-width: 2; }
.st.wi { padding-left: 16px; gap: 10px; }
.st.nw { padding-left: 18px; }
.ic1 { margin-left: 7px; margin-right: 12px; }
.status { height: 39px; background: #ebebeb; display: flex; align-items: center; padding: 0 0 2px 5px; color: #000; font-size: 23.5px; }
.status > span + span { margin-left: 35px; }
.user { margin-left: auto; width: 254px; height: 39px; border-left: 2px solid #c8c8c8; display: flex; align-items: center; padding: 0 15px 0 12px; }
.user span { margin-left: 20px; }

.taskbar { height: 96px; border-top: 1px solid #e3d3c1; display: flex; align-items: center; background: linear-gradient(97deg, #f5e6da 0, #f8e9d5 300px, #f8e9d0 1120px, #dfddd6 1245px, #d8dde1 1310px, #dadedd 1440px, #e6dfd5 1510px, #f1ddd1 1590px, #efdfcb 2030px, #ecdccc 2736px); }
.apps { margin-left: 810px; }
.tray { margin-left: 40px; }
.clock { width: 130px; margin-right: 18px; padding-bottom: 4px; display: flex; flex-direction: column; align-items: flex-end; font: 22.500px/32px "Noto Sans", sans-serif; color: #1a1a1a; }
.zoomt { font: 700 13px Lato, sans-serif; fill: #fff; }
.sm { font-size: 9px; }
.badge { font: 21px Lato, sans-serif; fill: #fff; }
</style>
